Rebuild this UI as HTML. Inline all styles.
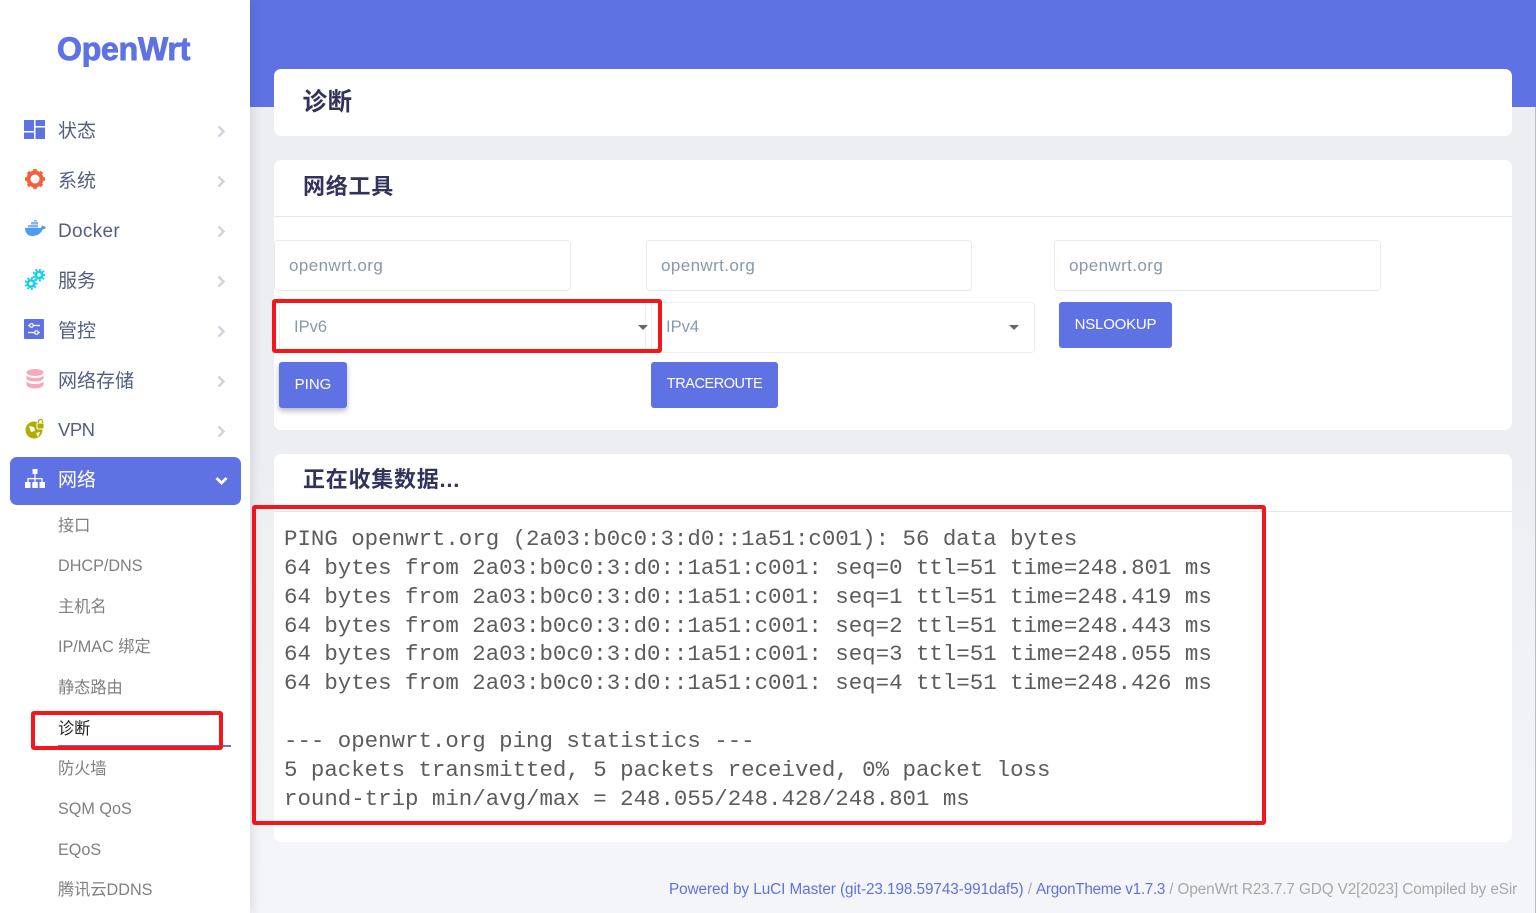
<!DOCTYPE html>
<html lang="zh"><head><meta charset="utf-8"><title>诊断</title>
<style>
*{box-sizing:border-box}
html,body{margin:0;padding:0;width:1536px;height:913px;overflow:hidden;background:linear-gradient(#eceef1 0,#eceef1 450px,#f4f5f8 860px);font-family:"Liberation Sans","Noto Sans CJK SC",sans-serif}
.a{position:absolute}
.top{left:250px;top:0;width:1286px;height:107px;background:#5e72e4}
.side{left:0;top:0;width:250px;height:913px;background:#fff;box-shadow:2px 0 10px rgba(50,50,93,.14)}
.card{position:absolute;left:274px;width:1238px;background:#fff;border-radius:7px}
.h{position:absolute;left:303px;font-weight:700;color:#32325d;font-size:22px;line-height:30px;white-space:nowrap;letter-spacing:.75px}
.m{position:absolute;left:58px;font-size:19px;line-height:26px;color:#525f7f;white-space:nowrap}
.s{position:absolute;left:58px;font-size:16.2px;line-height:22px;color:#7f7f7f;white-space:nowrap}
.ch{position:absolute;left:217px;width:9px;height:13px}
.ic{position:absolute;left:24px}
.inp{position:absolute;top:240px;height:51px;border:1px solid #e9ecef;border-radius:4px;background:#fff;color:#8898aa;font-size:17px;line-height:50px;padding-left:14px;letter-spacing:.4px}
.sel{position:absolute;top:302px;height:51px;border:1px solid #eceef2;border-radius:4px;background:#fff;color:#8898aa;font-size:16.5px;line-height:48px}
.arr{position:absolute;width:0;height:0;border-left:5px solid transparent;border-right:5px solid transparent;border-top:5px solid #666}
.btn{position:absolute;height:46px;background:#5e72e4;color:#fff;border-radius:3px;font-size:15px;line-height:45px;text-align:center}
.red{position:absolute;border:4px solid #f5161b;border-radius:3px}
pre{position:absolute;left:284px;top:525px;margin:0;font-family:"Liberation Mono","Noto Sans CJK SC",monospace;font-size:22.42px;line-height:28.85px;color:#5c5c5c;white-space:pre}
.ft{position:absolute;left:669px;top:881px;font-size:15.3px;line-height:18px;color:#a8a8a8;white-space:nowrap;letter-spacing:-.1px}
.ft b{font-weight:400;color:#5e72e4}
</style></head><body>
<div class="a top"></div>
<div class="a" style="left:1535px;top:107px;width:1px;height:806px;background:#b9bdc4"></div>

<div class="card" style="top:69px;height:67px"></div>
<div class="h" style="top:88px;left:302.500px;font-size:24.500px;letter-spacing:.5px">诊断</div>

<div class="card" style="top:160px;height:270px"></div>
<div class="h" style="top:172px">网络工具</div>
<div class="a" style="left:274px;top:216px;width:1238px;height:1px;background:#e4e6ec"></div>

<div class="inp" style="left:274px;width:297px">openwrt.org</div>
<div class="inp" style="left:646px;width:326px">openwrt.org</div>
<div class="inp" style="left:1054px;width:327px">openwrt.org</div>

<div class="sel" style="left:279px;width:367px;padding-left:14px">IPv6</div>
<div class="arr" style="left:638px;top:325px"></div>
<div class="sel" style="left:651px;width:384px;padding-left:14px">IPv4</div>
<div class="arr" style="left:1009px;top:325px"></div>
<div class="btn" style="left:1059px;top:302px;width:113px;letter-spacing:-.2px">NSLOOKUP</div>
<div class="btn" style="left:279px;top:362px;width:68px;box-shadow:0 3px 6px rgba(50,50,93,.35)">PING</div>
<div class="btn" style="left:651px;top:362px;width:127px;font-size:14.500px;letter-spacing:-.45px">TRACEROUTE</div>
<div class="red" style="left:272px;top:299px;width:390px;height:54px"></div>

<div class="card" style="top:454px;height:388px"></div>
<div class="h" style="top:465px">正在收集数据...</div>
<div class="a" style="left:274px;top:511px;width:1238px;height:1px;background:#e4e6ec"></div>
<pre>PING openwrt.org (2a03:b0c0:3:d0::1a51:c001): 56 data bytes
64 bytes from 2a03:b0c0:3:d0::1a51:c001: seq=0 ttl=51 time=248.801 ms
64 bytes from 2a03:b0c0:3:d0::1a51:c001: seq=1 ttl=51 time=248.419 ms
64 bytes from 2a03:b0c0:3:d0::1a51:c001: seq=2 ttl=51 time=248.443 ms
64 bytes from 2a03:b0c0:3:d0::1a51:c001: seq=3 ttl=51 time=248.055 ms
64 bytes from 2a03:b0c0:3:d0::1a51:c001: seq=4 ttl=51 time=248.426 ms

--- openwrt.org ping statistics ---
5 packets transmitted, 5 packets received, 0% packet loss
round-trip min/avg/max = 248.055/248.428/248.801 ms</pre>
<div class="red" style="left:252px;top:505px;width:1014px;height:320px"></div>

<div class="ft"><b style="letter-spacing:-.07px">Powered by LuCI Master (git-23.198.59743-991daf5)</b> / <b style="letter-spacing:-.31px">ArgonTheme v1.7.3</b> / OpenWrt R23.7.7 GDQ V2[2023] Compiled by eSir</div>

<div class="a side"></div>
<div class="a" style="left:57px;top:28px;font-size:32px;line-height:42px;font-weight:700;color:#5e72e4;white-space:nowrap;letter-spacing:-.2px;-webkit-text-stroke:.9px #5e72e4">OpenWrt</div>

<svg class="ic" style="top:120px" width="21" height="19" viewBox="0 0 21 19" fill="#5e72e4"><rect width="10" height="11"/><rect x="11.500" width="9.500" height="6"/><rect y="12.500" width="10" height="6.500"/><rect x="11.500" y="7.500" width="9.500" height="11.500"/></svg>
<div class="m" style="top:119px">状态</div>
<svg class="ic" style="top:169px;left:25px" width="20" height="20" viewBox="0 0 20 20"><circle cx="10" cy="10" r="6.500" fill="none" stroke="#f5603a" stroke-width="4"/><g stroke="#f5603a" stroke-width="3.400"><path d="M10 0v4M10 16v4M0 10h4M16 10h4M3 3l3 3M14 14l3 3M17 3l-3 3M6 14l-3 3"/></g></svg>
<div class="m" style="top:169px">系统</div>
<svg class="ic" style="top:220px;left:25px" width="21" height="18" viewBox="0 0 21 18"><path d="M0 8h15c1 0 2-1 2-2.500 1 .5 3 1 4 1.500-1 2-2 2.500-3.500 2.500C16 14 12 16 7 16 3 16 0 13 0 8z" fill="#4f9cf5"/><path d="M3 5h10v2.500H3zM6 2h7v2.500H6zM9 0h3v1.500H9z" fill="#7db5f7"/></svg>
<div class="m" style="top:219px;letter-spacing:.3px">Docker</div>
<svg class="ic" style="top:269px;left:25px" width="20" height="21" viewBox="0 0 20 21"><g fill="none" stroke="#14cfee"><circle cx="14" cy="6" r="3.200" stroke-width="2.600"/><circle cx="6" cy="14.500" r="3.200" stroke-width="2.600"/><path stroke-width="2" stroke-dasharray="2 1.800" d="M14 .5a5.500 5.500 0 1 1-.01 0zM6 9a5.500 5.500 0 1 1-.01 0z"/></g></svg>
<div class="m" style="top:269px">服务</div>
<svg class="ic" style="top:319px" width="20" height="20" viewBox="0 0 20 20"><rect width="20" height="20" rx="1" fill="#5e72e4"/><path d="M4 6.500h12M4 13.500h12" stroke="#fff" stroke-width="1.200"/><circle cx="7.500" cy="6.500" r="1.800" fill="#5e72e4" stroke="#fff" stroke-width="1.200"/><circle cx="12.500" cy="13.500" r="1.800" fill="#5e72e4" stroke="#fff" stroke-width="1.200"/></svg>
<div class="m" style="top:319px">管控</div>
<svg class="ic" style="top:369px;left:26px" width="18" height="20" viewBox="0 0 18 20" fill="#f7a8ba"><ellipse cx="9" cy="3.500" rx="8.500" ry="3.500"/><path d="M.5 6c1 2 4 3 8.500 3s7.500-1 8.500-3v3.500c-1 2-4 3-8.500 3S1.500 11.500.5 9.500zM.5 12c1 2 4 3 8.500 3s7.500-1 8.500-3v4c-1 2-4 3.500-8.500 3.500S1.500 18 .5 16z"/></svg>
<div class="m" style="top:369px">网络存储</div>
<svg class="ic" style="top:419px;left:25px" width="20" height="20" viewBox="0 0 20 20"><circle cx="9" cy="11" r="8.500" fill="#adb000"/><path d="M4 7l5 1 1 4-4 1zM11 14l4-1-2 5z" fill="#fff"/><rect x="12" y="4" width="7" height="6" rx="1" fill="#adb000" stroke="#fff"/><path d="M13.500 4V2.500a2 2 0 0 1 4 0V4" fill="none" stroke="#adb000" stroke-width="1.300"/></svg>
<div class="m" style="top:417px;font-size:18.500px;letter-spacing:-.5px">VPN</div>

<div class="a" style="left:10px;top:457px;width:231px;height:48px;background:#5e72e4;border-radius:7px"></div>
<svg class="ic" style="top:469px;left:25px" width="20" height="20" viewBox="0 0 20 20" fill="#fff"><rect x="7.500" y="0" width="5" height="5"/><rect x="0" y="13" width="5.500" height="6"/><rect x="7.300" y="13" width="5.500" height="6"/><rect x="14.500" y="13" width="5.500" height="6"/><path d="M9.400 5h1.200v4h7v4h-1.200v-2.800h-5.800V13H9.400v-2.800H3.600V13H2.400V9h7z"/></svg>
<div class="m" style="top:468px;color:#fff">网络</div>
<svg class="a" style="left:215px;top:476px" width="13" height="10" viewBox="0 0 13 10"><path d="M1.500 2l5 5 5-5" fill="none" stroke="#fff" stroke-width="2.800"/></svg>

<svg class="ch" style="top:125px" viewBox="0 0 9 13"><path d="M1.500 1.500l5 5-5 5" fill="none" stroke="#ced4da" stroke-width="2.400"/></svg>
<svg class="ch" style="top:175px" viewBox="0 0 9 13"><path d="M1.500 1.500l5 5-5 5" fill="none" stroke="#ced4da" stroke-width="2.400"/></svg>
<svg class="ch" style="top:225px" viewBox="0 0 9 13"><path d="M1.500 1.500l5 5-5 5" fill="none" stroke="#ced4da" stroke-width="2.400"/></svg>
<svg class="ch" style="top:275px" viewBox="0 0 9 13"><path d="M1.500 1.500l5 5-5 5" fill="none" stroke="#ced4da" stroke-width="2.400"/></svg>
<svg class="ch" style="top:325px" viewBox="0 0 9 13"><path d="M1.500 1.500l5 5-5 5" fill="none" stroke="#ced4da" stroke-width="2.400"/></svg>
<svg class="ch" style="top:375px" viewBox="0 0 9 13"><path d="M1.500 1.500l5 5-5 5" fill="none" stroke="#ced4da" stroke-width="2.400"/></svg>
<svg class="ch" style="top:425px" viewBox="0 0 9 13"><path d="M1.500 1.500l5 5-5 5" fill="none" stroke="#ced4da" stroke-width="2.400"/></svg>

<div class="s" style="top:515px">接口</div>
<div class="s" style="top:555px">DHCP/DNS</div>
<div class="s" style="top:596px">主机名</div>
<div class="s" style="top:636px">IP/MAC 绑定</div>
<div class="s" style="top:677px">静态路由</div>
<div class="s" style="top:718px;color:#222">诊断</div>
<div class="a" style="left:58px;top:745px;width:173px;height:2px;background:#5e72e4"></div>
<div class="s" style="top:758px">防火墙</div>
<div class="s" style="top:798px">SQM QoS</div>
<div class="s" style="top:839px">EQoS</div>
<div class="s" style="top:879px">腾讯云DDNS</div>
<div class="red" style="left:31px;top:711px;width:192px;height:39px"></div>
</body></html>
